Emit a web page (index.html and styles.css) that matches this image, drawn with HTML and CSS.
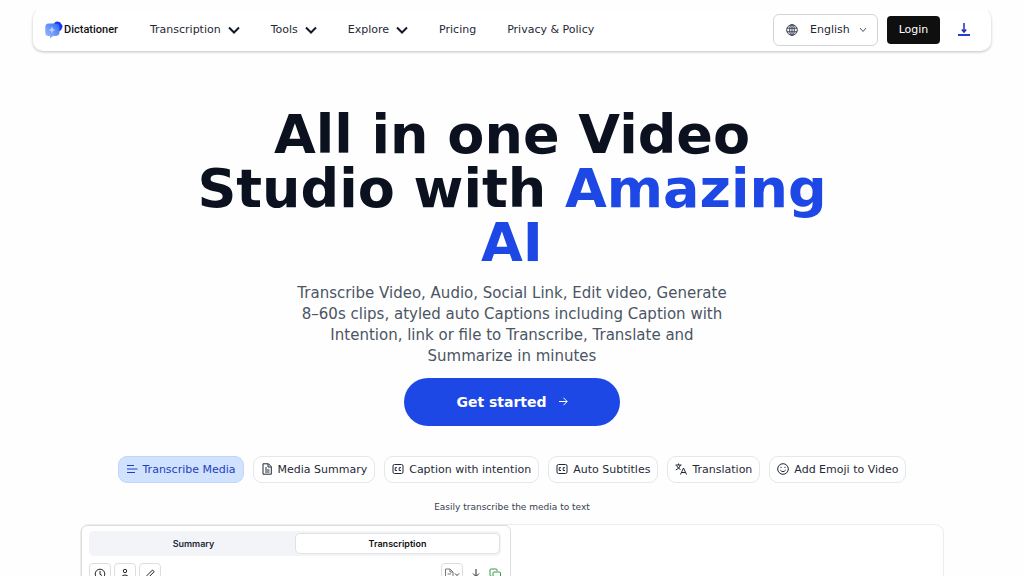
FILE: index.html
```html
<!DOCTYPE html>
<html lang="en">
<head>
    <meta charset="UTF-8">
    <meta name="viewport" content="width=device-width, initial-scale=1.0">
    <title>Dictationer</title>
    <link rel="stylesheet" href="styles.css">
</head>
<body>
    <header class="navbar">
        <a class="logo" href="#">
            <svg width="18" height="18" viewBox="0 0 18 18" aria-hidden="true">
                <defs>
                    <linearGradient id="bubble" x1="1" y1="0" x2="0" y2="1">
                        <stop offset="0" stop-color="#2f62f5"/>
                        <stop offset="0.500" stop-color="#6b97f8"/>
                        <stop offset="1" stop-color="#9dbdfb"/>
                    </linearGradient>
                </defs>
                <path d="M9.500 2Q11 0 13 0.700Q15.500 0.500 16 2.800Q18.500 4.500 17 7Q16.500 10 14 10.500Q10 11 8.500 7Q7.500 3.500 9.500 2Z" fill="#1238f0"/>
                <path d="M3.500 2.500H10.500Q14.500 2.500 14.500 6.500V11Q14.500 15 10.500 15H8L5 17.500V15H3.500Q0.300 15 0.300 11.500V6Q0.300 2.500 3.500 2.500Z" fill="url(#bubble)"/>
                <path d="M7 5.500L8.200 8L10.500 9L8.200 10L7 12.500L5.800 10L3.500 9L5.800 8Z" fill="#b5cffc"/>
            </svg>
            <span>Dictationer</span>
        </a>
        <nav class="nav-links">
            <button class="nav-item" type="button">Transcription
                <svg class="chevron" viewBox="0 0 12 8"><path d="M1 1.500L6 6.500L11 1.500"/></svg>
            </button>
            <button class="nav-item" type="button">Tools
                <svg class="chevron" viewBox="0 0 12 8"><path d="M1 1.500L6 6.500L11 1.500"/></svg>
            </button>
            <button class="nav-item" type="button">Explore
                <svg class="chevron" viewBox="0 0 12 8"><path d="M1 1.500L6 6.500L11 1.500"/></svg>
            </button>
            <a class="nav-item" href="#">Pricing</a>
            <a class="nav-item" href="#">Privacy &amp; Policy</a>
        </nav>
        <div class="nav-actions">
            <label class="language">
                <svg width="12" height="12" viewBox="0 0 12 12" fill="none" stroke="#374151">
                    <circle cx="6" cy="6" r="5.300"/>
                    <ellipse cx="6" cy="6" rx="2.300" ry="5.300"/>
                    <path d="M1 4.200H11M1 7.800H11M6 1V11"/>
                </svg>
                <select aria-label="Language">
                    <option>English</option>
                </select>
                <svg width="8" height="6" viewBox="0 0 8 6" fill="none" stroke="#4b5563"><path d="M1 1L4 4.500L7 1"/></svg>
            </label>
            <button class="login" type="button">Login</button>
            <a class="download" href="#" aria-label="Download">
                <svg width="12" height="13" viewBox="0 0 12 13" fill="none" stroke="#1e2fa8">
                    <path d="M6 0V9" stroke-width="1.500"/>
                    <path d="M3.800 6.500L6 9L8.200 6.500" stroke-width="1.500"/>
                    <path d="M0 12H12" stroke="#2440d0" stroke-width="2"/>
                </svg>
            </a>
        </div>
    </header>

    <main>
        <section class="hero">
            <h1>All in one Video Studio with <span>Amazing AI</span></h1>
            <p class="lead">Transcribe Video, Audio, Social Link, Edit video, Generate 8–60s clips, atyled auto Captions including Caption with Intention, link or file to Transcribe, Translate and Summarize in minutes</p>
            <button class="cta" type="button">Get started
                <svg width="9" height="9" viewBox="0 0 9 9" fill="none" stroke="#fff"><path d="M0 4.500H8M4.500 0.800L8.200 4.500L4.500 8.200"/></svg>
            </button>
        </section>

        <section class="features">
            <div class="tabs">
                <button class="tab active" type="button">
                    <svg class="icon" viewBox="0 0 12 12"><path d="M1 2.500H8M1 6H11.500M1 9.500H9"/></svg>
                    Transcribe Media
                </button>
                <button class="tab" type="button">
                    <svg class="icon" viewBox="0 0 12 12"><path d="M2 0.800H7.500L10.300 3.600V11.200H2ZM7 1V4H10M4 5H6M4 7H8.500M4 9H8.500"/></svg>
                    Media Summary
                </button>
                <button class="tab" type="button">
                    <svg class="icon" viewBox="0 0 12 12"><rect x="1" y="1.500" width="10" height="9" rx="1.500"/><path d="M5 4.700H3.200V7.500H5M9 4.700H7.200V7.500H9"/></svg>
                    Caption with intention
                </button>
                <button class="tab" type="button">
                    <svg class="icon" viewBox="0 0 12 12"><rect x="1" y="1.500" width="10" height="9" rx="1.500"/><path d="M5 4.700H3.200V7.500H5M9 4.700H7.200V7.500H9"/></svg>
                    Auto Subtitles
                </button>
                <button class="tab" type="button">
                    <svg class="icon" viewBox="0 0 12 12"><path d="M0.500 2H6.500M3.500 0.500V2M5.500 2Q4.500 5.500 0.800 7M1.500 2.500Q3 5.500 5.500 6.500M5.500 11.500L8.500 5L11.500 11.500M6.500 9.500H10.500"/></svg>
                    Translation
                </button>
                <button class="tab" type="button">
                    <svg class="icon" viewBox="0 0 12 12"><circle cx="6" cy="6" r="5.300"/><path d="M3.300 7Q6 10.300 8.700 7M4 3.800V5M8 3.800V5"/></svg>
                    Add Emoji to Video
                </button>
            </div>
            <p class="caption">Easily transcribe the media to text</p>
        </section>

        <section class="preview">
            <div class="panel">
                <div class="switch">
                    <button type="button">Summary</button>
                    <button class="selected" type="button">Transcription</button>
                </div>
                <div class="toolbar">
                    <button class="tool" type="button" aria-label="Timestamps">
                        <svg class="icon" viewBox="0 0 12 12"><circle cx="6" cy="6" r="4.800"/><path d="M6 3V6.300L8 7.500"/></svg>
                    </button>
                    <button class="tool" type="button" aria-label="Speakers">
                        <svg class="icon" viewBox="0 0 12 12"><circle cx="6" cy="3" r="1.700"/><path d="M3 11V9Q3 7 6 7Q9 7 9 9V11"/></svg>
                    </button>
                    <button class="tool" type="button" aria-label="Edit">
                        <svg class="icon" viewBox="0 0 12 12"><path d="M2 10L3 7.500L8.500 2L10.200 3.600L4.700 9.200Z"/></svg>
                    </button>
                    <div class="exports">
                        <button class="tool" type="button" aria-label="File format">
                            <svg class="format" viewBox="0 0 16 12"><path d="M1.500 1H6L9 4V11H1.500ZM6 1V4H9M3.500 6H7M3.500 8.500H7"/><path d="M11 5.500L13 7.500L15 5.500" stroke="#333"/></svg>
                        </button>
                        <button class="plain" type="button" aria-label="Save">
                            <svg class="icon" viewBox="0 0 12 12"><path d="M6 1V8M3 5.500L6 8.500L9 5.500M1.500 11H10.500"/></svg>
                        </button>
                        <button class="plain copy" type="button" aria-label="Copy">
                            <svg class="icon" viewBox="0 0 12 12"><rect x="4" y="4" width="7.500" height="7.500" rx="1"/><path d="M2.500 8H2Q1 8 1 7V2Q1 1 2 1H7Q8 1 8 2V3"/></svg>
                        </button>
                    </div>
                </div>
            </div>
        </section>
    </main>
</body>
</html>
```
FILE: styles.css
```css
* {
    box-sizing: border-box;
}
body {
    margin: 0;
    background-color: #fefefe;
    color: #1f2937;
    font-family: "DejaVu Sans", sans-serif;
}
button, select {
    font: inherit;
    color: inherit;
    background: none;
    border: none;
    padding: 0;
    cursor: pointer;
}
a {
    color: inherit;
    text-decoration: none;
}
svg {
    flex-shrink: 0;
}
.navbar {
    display: flex;
    align-items: center;
    height: 42px;
    margin: 9px 33px 0;
    padding: 0 21px 1px 12px;
    background-color: white;
    border-radius: 10px;
    box-shadow: 0 1px 3px rgba(0, 0, 0, 0.25);
    clip-path: inset(2px -6px -6px -6px);
    font-size: 11px;
}
.logo {
    display: flex;
    align-items: center;
    gap: 1px;
    color: #111;
    font: 500 11px Roboto, sans-serif;
}
.nav-links {
    display: flex;
    align-items: center;
    gap: 31px;
    margin-left: 32px;
}
.nav-item {
    display: flex;
    align-items: center;
    gap: 7px;
}
.chevron {
    width: 12px;
    height: 8px;
    fill: none;
    stroke: #111827;
    stroke-width: 2;
}
.nav-actions {
    display: flex;
    align-items: center;
    margin-left: auto;
}
.language {
    display: flex;
    align-items: center;
    width: 105px;
    height: 32px;
    padding: 0 10px 0 12px;
    border: 1px solid #d1d5db;
    border-radius: 6px;
}
.language select {
    flex: 1;
    margin-left: 12px;
    appearance: none;
    outline: none;
}
.login {
    width: 53px;
    height: 28px;
    margin: 0 18px 0 9px;
    background-color: #0f0f10;
    color: white;
    border-radius: 4px;
}
.download {
    display: flex;
}
.hero {
    display: flex;
    flex-direction: column;
    align-items: center;
    padding-top: 57px;
    text-align: center;
}
h1 {
    max-width: 680px;
    margin: 0;
    color: #0b111e;
    font-size: 54px;
    line-height: 54px;
}
h1 span {
    color: #1d48e5;
}
.lead {
    max-width: 440px;
    margin: 13px 0 11px;
    color: #4b5563;
    font-size: 15px;
    line-height: 21px;
}
.cta {
    display: flex;
    align-items: center;
    justify-content: center;
    gap: 12px;
    width: 216px;
    height: 48px;
    padding-bottom: 1px;
    background-color: #1d48e5;
    color: white;
    border-radius: 24px;
    font-size: 14px;
    font-weight: bold;
}
.tabs {
    display: flex;
    justify-content: center;
    gap: 9px;
    margin-top: 30px;
}
.tab {
    display: flex;
    align-items: center;
    gap: 5px;
    height: 27px;
    padding: 0 7px 1px;
    background-color: white;
    border: 1px solid #e5e7eb;
    border-radius: 9px;
    font-size: 11px;
    white-space: nowrap;
}
.tab.active {
    background-color: #d0e2fe;
    border-color: #bfd7fb;
    color: #1e3fc0;
}
.icon {
    width: 12px;
    height: 12px;
    fill: none;
    stroke: currentColor;
}
.caption {
    margin: 18px 0 11px;
    color: #374151;
    font-size: 9px;
    line-height: 12px;
    text-align: center;
}
.preview {
    max-width: 864px;
    height: 400px;
    margin: 0 auto;
    background-color: white;
    border: 1px solid #ececec;
    border-radius: 9px;
}
.panel {
    width: 430px;
    height: 100%;
    padding: 5px 9px 5px 7px;
    border: 1px solid #dedede;
    border-radius: 6px;
    font-family: Inter, sans-serif;
}
.switch {
    display: flex;
    height: 25px;
    padding: 2px 1px 2px 3px;
    background-color: #f3f4f8;
    border-radius: 5px;
    font-size: 9px;
    font-weight: 600;
}
.switch button {
    flex: 1;
}
.switch .selected {
    background-color: white;
    border: 1px solid #e0e2e6;
    border-radius: 5px;
    color: #111;
}
.toolbar {
    display: flex;
    gap: 3px;
    margin-top: 7px;
}
.tool {
    display: flex;
    align-items: center;
    justify-content: center;
    width: 22px;
    height: 22px;
    border: 1px solid #dedede;
    border-radius: 4px;
    color: #222;
}
.exports {
    display: flex;
    gap: 7px;
    margin-left: auto;
}
.format {
    width: 16px;
    height: 12px;
    fill: none;
    stroke: #777;
}
.plain {
    display: flex;
    align-items: center;
    width: 12px;
}
.copy {
    color: #2f9e44;
}
```
